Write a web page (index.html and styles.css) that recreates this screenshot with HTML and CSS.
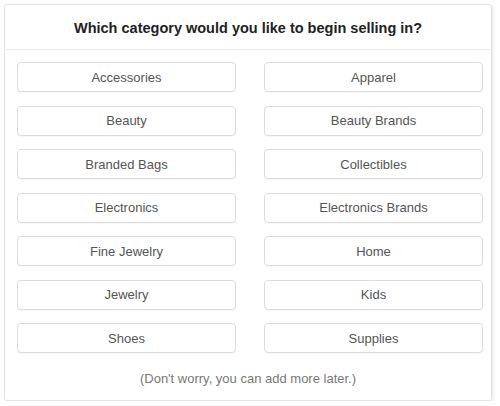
FILE: index.html
```html
<!DOCTYPE html>
<html>
<head>
<meta charset="utf-8">
<link rel="stylesheet" href="styles.css">
</head>
<body>
<div class="card">
  <div class="card-header">
    <h1 class="title">Which category would you like to begin selling in?</h1>
  </div>
  <div class="card-body">
    <div class="grid">
      <button class="cat">Accessories</button>
      <button class="cat">Apparel</button>
      <button class="cat">Beauty</button>
      <button class="cat">Beauty Brands</button>
      <button class="cat">Branded Bags</button>
      <button class="cat">Collectibles</button>
      <button class="cat">Electronics</button>
      <button class="cat">Electronics Brands</button>
      <button class="cat">Fine Jewelry</button>
      <button class="cat">Home</button>
      <button class="cat">Jewelry</button>
      <button class="cat">Kids</button>
      <button class="cat">Shoes</button>
      <button class="cat">Supplies</button>
    </div>
    <p class="note">(Don't worry, you can add more later.)</p>
  </div>
</div>
</body>
</html>
```

FILE: styles.css
```css
html, body {
  margin: 0;
  padding: 0;
  background: #fff;
}
body {
  font-family: "Liberation Sans", Arial, sans-serif;
}
.card {
  margin: 4px 0 0 4px;
  width: 488px;
  height: 397px;
  box-sizing: border-box;
  border: 1px solid #e2e2e2;
  border-radius: 3px;
  box-shadow: 2px 2px 3px rgba(0,0,0,0.07);
  display: flex;
  flex-direction: column;
}
.card-header {
  height: 44px;
  border-bottom: 1px solid #ececec;
  display: flex;
  align-items: center;
  justify-content: center;
}
.title {
  margin: 0;
  padding-top: 2px;
  font-size: 14.5px;
  font-weight: bold;
  color: #222;
}
.card-body {
  padding: 12px 0 0 12px;
}
.grid {
  display: grid;
  grid-template-columns: 219px 219px;
  column-gap: 28px;
  row-gap: 13.5px;
}
.cat {
  height: 30px;
  margin: 0;
  padding: 0;
  background: #fff;
  border: 1px solid #dcdcdc;
  border-radius: 4px;
  box-shadow: 0 1px 1px rgba(0,0,0,0.03);
  font-family: "Liberation Sans", Arial, sans-serif;
  font-size: 13px;
  color: #555;
  text-align: center;
}
.note {
  margin: 18px 0 0 0;
  padding-right: 12px;
  text-align: center;
  font-size: 13px;
  color: #777;
}
```
